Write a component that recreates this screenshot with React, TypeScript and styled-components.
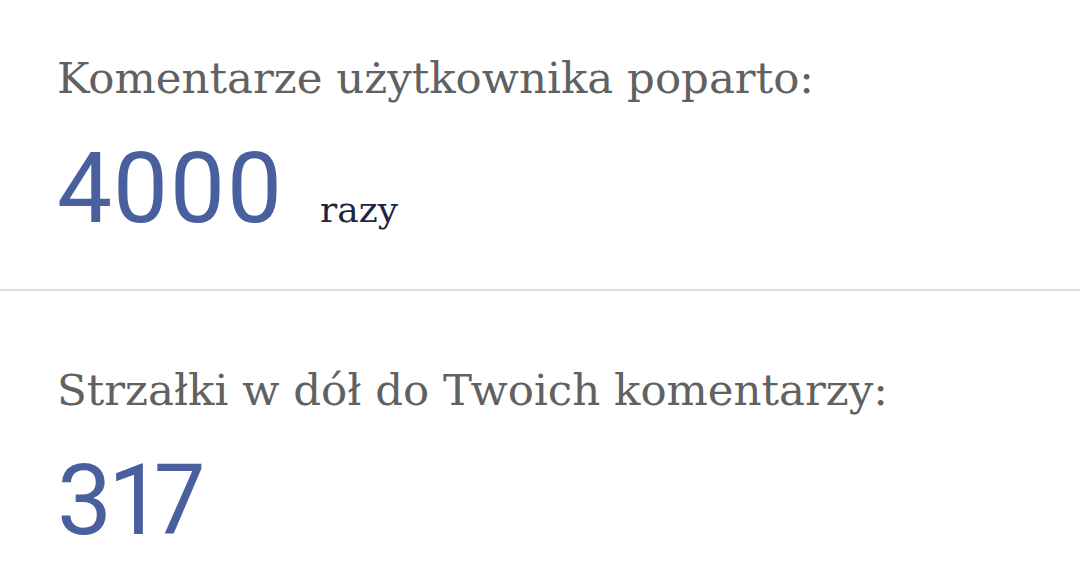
import styled, { createGlobalStyle } from "styled-components";

const GlobalStyle = createGlobalStyle`
  html, body {
    margin: 0;
    padding: 0;
    background: #ffffff;
  }
`;

const Page = styled.div`
  width: 1080px;
  height: 580px;
  overflow: hidden;
  background: #ffffff;
  font-family: "Roboto Slab", "DejaVu Serif", serif;
`;

const Section = styled.section<{ $divider?: boolean }>`
  display: flex;
  flex-direction: column;
  padding: ${(p) => (p.$divider ? "50px" : "71px")} 0 0 57px;
  height: ${(p) => (p.$divider ? "291px" : "auto")};
  box-sizing: border-box;
  border-bottom: ${(p) => (p.$divider ? "2px solid #dddddd" : "none")};
`;

const Label = styled.div`
  font-size: 43.5px;
  line-height: 56px;
  color: #616161;
`;

const ValueRow = styled.div`
  display: flex;
  align-items: baseline;
  gap: 37px;
  margin-top: 33px;
`;

const Value = styled.span`
  font-family: "Roboto", "DejaVu Sans", sans-serif;
  font-size: 98px;
  line-height: 100px;
  font-variant-numeric: proportional-nums;
  color: #4a5f9e;
`;

const Unit = styled.span`
  font-size: 36px;
  color: #1c2541;
`;

function App() {
  return (
    <Page>
      <GlobalStyle />
      <Section $divider>
        <Label>Komentarze użytkownika poparto:</Label>
        <ValueRow>
          <Value>4000</Value>
          <Unit>razy</Unit>
        </ValueRow>
      </Section>
      <Section>
        <Label>Strzałki w dół do Twoich komentarzy:</Label>
        <ValueRow>
          <Value>317</Value>
        </ValueRow>
      </Section>
    </Page>
  );
}

export default App;
